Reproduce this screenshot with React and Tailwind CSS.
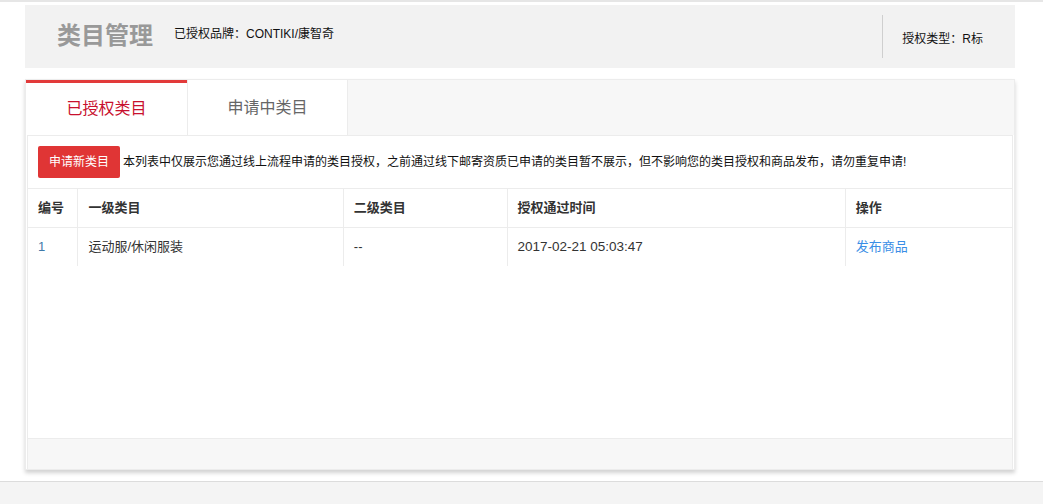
import React from 'react';

const FONT = { fontFamily: '"Liberation Sans", Arial, "Noto Sans CJK SC", sans-serif' };

const COLS = [
  { key: 'no', label: '编号', w: 'w-[50px]' },
  { key: 'cat1', label: '一级类目', w: 'w-[266px]' },
  { key: 'cat2', label: '二级类目', w: 'w-[164px]' },
  { key: 'time', label: '授权通过时间', w: 'w-[339px]' },
  { key: 'op', label: '操作', w: 'w-[167px]' },
];

const ROWS = [
  { no: '1', cat1: '运动服/休闲服装', cat2: '--', time: '2017-02-21 05:03:47' },
];

export default function App() {
  return (
    <div className="w-[1043px] h-[504px] bg-white flex flex-col overflow-hidden" style={FONT}>
      {/* top line */}
      <div className="h-[2px] bg-[#e6e6e6] shrink-0" />

      <div className="pl-[25px] pt-[3px] flex-1">
        {/* Header */}
        <div className="w-[990px] h-[63px] bg-[#f2f2f2] flex items-center pl-[32px]">
          <h1 className="text-[24px] font-bold text-[#999] leading-none -mt-[2px]">类目管理</h1>
          <span className="ml-[21px] text-[12px] text-[#111] -mt-[6px]">已授权品牌：CONTIKI/康智奇</span>
          <div className="ml-auto h-[43px] border-l border-[#cfcfcf] flex items-center pl-[19px] pr-[32px]">
            <span className="text-[12px] text-[#111] mt-[4px]">授权类型：R标</span>
          </div>
        </div>

        {/* Panel */}
        <div className="mt-[11px] w-[990px] border border-[#ececec] shadow-[0_3px_4px_rgba(0,0,0,0.18)]">
          {/* Tabs */}
          <div className="flex h-[55px] bg-[#f7f7f7]">
            <div className="w-[161px] bg-white border-t-[3px] border-[#e23a3a] flex items-center justify-center text-[16px] text-[#c8102e]">
              已授权类目
            </div>
            <div className="w-[161px] bg-white border-l border-r border-[#ececec] flex items-center justify-center text-[16px] text-[#666]">
              申请中类目
            </div>
          </div>

          {/* Content */}
          <div className="mx-[1px] border-x border-t border-[#ececec] bg-white">
            <div className="h-[52px] flex items-center pl-[10px]">
              <button className="h-[32px] px-[11px] bg-[#e03535] text-white text-[12px] rounded-[2px]">申请新类目</button>
              <span className="ml-[3px] text-[12px] text-[#111]">
                本列表中仅展示您通过线上流程申请的类目授权，之前通过线下邮寄资质已申请的类目暂不展示，但不影响您的类目授权和商品发布，请勿重复申请!
              </span>
            </div>

            <table className="w-full border-collapse text-[13px] text-[#333]">
              <thead>
                <tr className="h-[39px] border-t border-b border-[#ececec]">
                  {COLS.map((c, i) => (
                    <th key={c.key} className={`${c.w} text-left font-bold px-[10px] ${i > 0 ? 'border-l border-[#ececec]' : ''}`}>
                      {c.label}
                    </th>
                  ))}
                </tr>
              </thead>
              <tbody>
                {ROWS.map(r => (
                  <tr key={r.no} className="h-[38px]">
                    <td className="px-[10px] text-[#3f79a8]">{r.no}</td>
                    <td className="px-[10px] border-l border-[#ececec]">{r.cat1}</td>
                    <td className="px-[10px] border-l border-[#ececec]">{r.cat2}</td>
                    <td className="px-[10px] border-l border-[#ececec] text-[13.5px]">{r.time}</td>
                    <td className="px-[10px] border-l border-[#ececec]">
                      <a className="text-[#3a8ee6] cursor-pointer">发布商品</a>
                    </td>
                  </tr>
                ))}
              </tbody>
            </table>

            <div className="h-[172px]" />
            <div className="h-[31px] bg-[#f7f7f7] border-t border-[#ececec]" />
          </div>
        </div>
      </div>

      {/* bottom bar */}
      <div className="h-[23px] bg-[#f4f4f4] border-t border-[#dcdcdc] shrink-0" />
    </div>
  );
}
